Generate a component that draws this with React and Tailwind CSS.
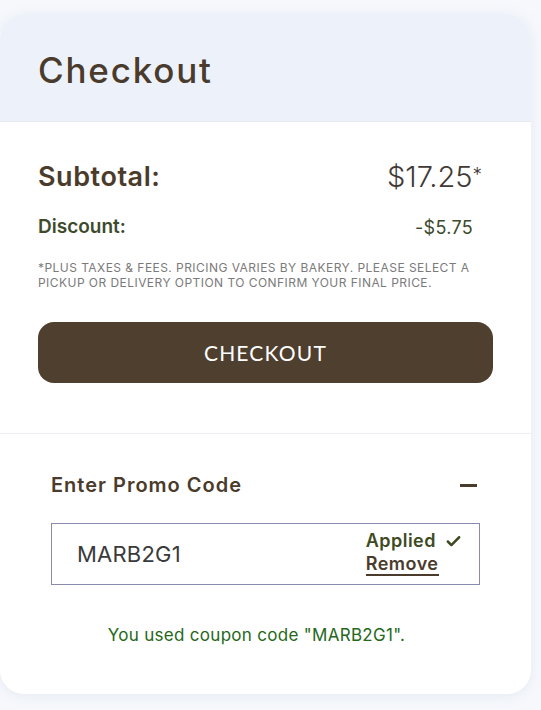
import { Check } from 'lucide-react'

const font = { fontFamily: 'Inter, "Noto Sans", sans-serif' }

export default function App() {
  return (
    <div className="w-[541px] h-[710px] bg-[#f6f8fc] pt-[14px] overflow-hidden" style={font}>
      <div className="w-[531px] h-[680px] bg-white rounded-[24px] shadow-[0_2px_14px_rgba(160,175,200,0.18)] overflow-hidden">
        {/* header */}
        <div className="h-[108px] bg-[#edf2fa] border-b border-[#e6ebf2] flex items-center px-[38px] pt-[5px]">
          <h1 className="text-[35px] font-medium text-[#4a3b2c] tracking-[1.8px]">Checkout</h1>
        </div>

        {/* totals */}
        <div className="px-[38px] pt-[39px] pb-[50px] border-b border-[#eceff3]">
          <div className="flex items-center justify-between h-[32px]">
            <span className="text-[27px] font-semibold text-[#4a3b2c] tracking-[0.55px]">Subtotal:</span>
            <span className="text-[29px] font-light text-[#3f3a36] mr-[11px]">
              $17.25<span className="text-[19px] relative top-[-6px]">*</span>
            </span>
          </div>
          <div className="flex items-center justify-between mt-[22px] h-[24px]">
            <span className="text-[19px] font-semibold text-[#3d4a2b]">Discount:</span>
            <span className="text-[18px] text-[#3d4a2b] mr-[20px] tracking-[0.3px]">-$5.75</span>
          </div>
          <p className="mt-[21px] text-[12px] leading-[15px] uppercase text-[#7a7a7a] tracking-[0.45px]">
            *Plus taxes &amp; fees. Pricing varies by bakery. Please select a pickup or delivery option to confirm your final price.
          </p>
          <button
            className="mt-[32px] w-full h-[61px] rounded-[16px] bg-[#4f3f2f] text-white text-[21px] tracking-[1.2px]"
            style={{ fontFamily: 'Lato, sans-serif' }}
          >
            CHECKOUT
          </button>
        </div>

        {/* promo */}
        <div className="px-[51px] pt-[39px]">
          <div className="flex items-center justify-between h-[24px]">
            <span className="text-[20px] font-semibold text-[#4a3b2c] tracking-[1px]">Enter Promo Code</span>
            <span className="w-[17px] h-[3px] bg-[#4a3b2c] mr-[3px]" />
          </div>
          <div className="mt-[26px] h-[62px] border border-[#8a8aae] flex items-center justify-between pl-[25px] pr-[17px]">
            <span className="text-[22px] text-[#3a3a3a] tracking-[0.2px]">MARB2G1</span>
            <div className="flex flex-col items-start leading-[24px] -mt-[3px]">
              <span className="flex items-center gap-[9px] text-[18px] font-semibold text-[#3d4a22] tracking-[0.5px]">
                Applied <Check size={17} strokeWidth={3.5} />
              </span>
              <span className="text-[18px] font-semibold text-[#4a3b2c] border-b-2 border-[#4a3b2c] leading-[21px] tracking-[0.5px]">Remove</span>
            </div>
          </div>
          <p className="mt-[38px] pr-[18px] text-center text-[17px] text-[#25681a] tracking-[0.3px]">You used coupon code "MARB2G1".</p>
        </div>
      </div>
    </div>
  )
}
